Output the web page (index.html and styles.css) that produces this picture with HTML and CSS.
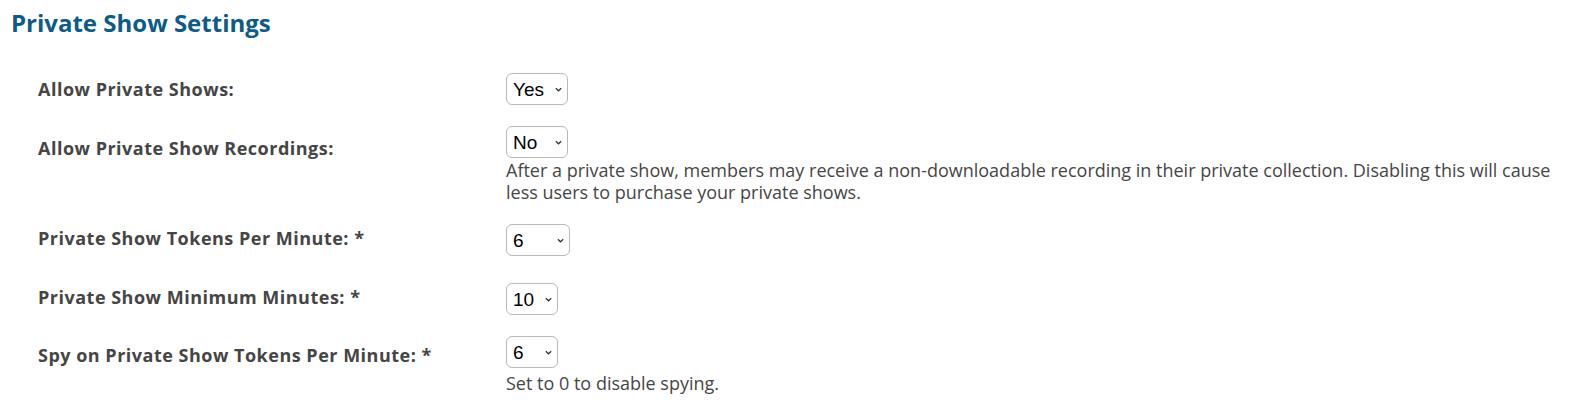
FILE: index.html
```html
<!DOCTYPE html>
<html lang="en">
<head>
<meta charset="utf-8">
<title>Private Show Settings</title>
<link rel="stylesheet" href="styles.css">
</head>
<body>
<div class="page">
  <h1 class="title">Private Show Settings</h1>
  <div class="form">
    <div class="row">
      <div class="label">Allow Private Shows:</div>
      <div class="control">
        <span class="select-wrap w62">
          <select class="select"><option>Yes</option><option>No</option></select>
          <svg class="chev" width="7" height="5" viewBox="0 0 7 5"><path d="M0.8 1.2 L3.5 3.8 L6.2 1.2" fill="none" stroke="#333" stroke-width="1.2"/></svg>
        </span>
      </div>
    </div>
    <div class="row">
      <div class="label label-low">Allow Private Show Recordings:</div>
      <div class="control">
        <span class="select-wrap w62">
          <select class="select"><option>No</option><option>Yes</option></select>
          <svg class="chev" width="7" height="5" viewBox="0 0 7 5"><path d="M0.8 1.2 L3.5 3.8 L6.2 1.2" fill="none" stroke="#333" stroke-width="1.2"/></svg>
        </span>
        <p class="help">After a private show, members may receive a non-downloadable recording in their private collection. Disabling this will cause less users to purchase your private shows.</p>
      </div>
    </div>
    <div class="row row-wide">
      <div class="label label-high">Private Show Tokens Per Minute: *</div>
      <div class="control">
        <span class="select-wrap w64">
          <select class="select"><option>6</option></select>
          <svg class="chev" width="7" height="5" viewBox="0 0 7 5"><path d="M0.8 1.2 L3.5 3.8 L6.2 1.2" fill="none" stroke="#333" stroke-width="1.2"/></svg>
        </span>
      </div>
    </div>
    <div class="row">
      <div class="label label-high">Private Show Minimum Minutes: *</div>
      <div class="control">
        <span class="select-wrap w52">
          <select class="select"><option>10</option></select>
          <svg class="chev" width="7" height="5" viewBox="0 0 7 5"><path d="M0.8 1.2 L3.5 3.8 L6.2 1.2" fill="none" stroke="#333" stroke-width="1.2"/></svg>
        </span>
      </div>
    </div>
    <div class="row">
      <div class="label label-low-sm">Spy on Private Show Tokens Per Minute: *</div>
      <div class="control">
        <span class="select-wrap w52">
          <select class="select"><option>6</option></select>
          <svg class="chev" width="7" height="5" viewBox="0 0 7 5"><path d="M0.8 1.2 L3.5 3.8 L6.2 1.2" fill="none" stroke="#333" stroke-width="1.2"/></svg>
        </span>
        <p class="help help-gap">Set to 0 to disable spying.</p>
      </div>
    </div>
  </div>
</div>
</body>
</html>
```
FILE: styles.css
```css
html, body {
  margin: 0;
  padding: 0;
  background: #ffffff;
}

body {
  font-family: "Open Sans", "Noto Sans", sans-serif;
  color: #444444;
}

.page {
  padding: 8px 30px 0 11px;
}

.title {
  margin: 0;
  font-size: 24px;
  line-height: 30px;
  font-weight: 700;
  color: #0d5b86;
}

.form {
  margin-top: 35px;
  padding-left: 27px;
}

.row {
  display: grid;
  grid-template-columns: 468px 1fr;
  align-items: start;
  margin-bottom: 21px;
}

.row-wide {
  margin-bottom: 27px;
}

.label {
  box-sizing: border-box;
  height: 32px;
  display: flex;
  align-items: center;
  font-size: 18px;
  letter-spacing: 0.5px;
  font-weight: 700;
  color: #454545;
}

.label-low {
  padding-top: 8px;
  height: 36px;
}

.label-low-sm {
  padding-top: 4px;
  height: 34px;
}

.label-high {
  padding-bottom: 4px;
}

.control {
  display: flex;
  flex-direction: column;
  align-items: flex-start;
}

.select-wrap {
  position: relative;
  display: inline-block;
  height: 32px;
}

.w62 { width: 62px; }
.w64 { width: 64px; }
.w52 { width: 52px; }

.select {
  -webkit-appearance: none;
  appearance: none;
  box-sizing: border-box;
  width: 100%;
  height: 32px;
  margin: 0;
  padding: 0 0 0 6px;
  border: 1px solid #b9b9b9;
  border-radius: 6px;
  background: #ffffff;
  font-family: "Liberation Sans", Arial, sans-serif;
  font-size: 19px;
  color: #000000;
  outline: none;
}

.chev {
  position: absolute;
  right: 6px;
  top: 14px;
  pointer-events: none;
}

.help {
  margin: 1px 0 0;
  font-size: 18px;
  line-height: 22px;
  color: #464646;
}

.help-gap {
  margin-top: 4px;
}
```
